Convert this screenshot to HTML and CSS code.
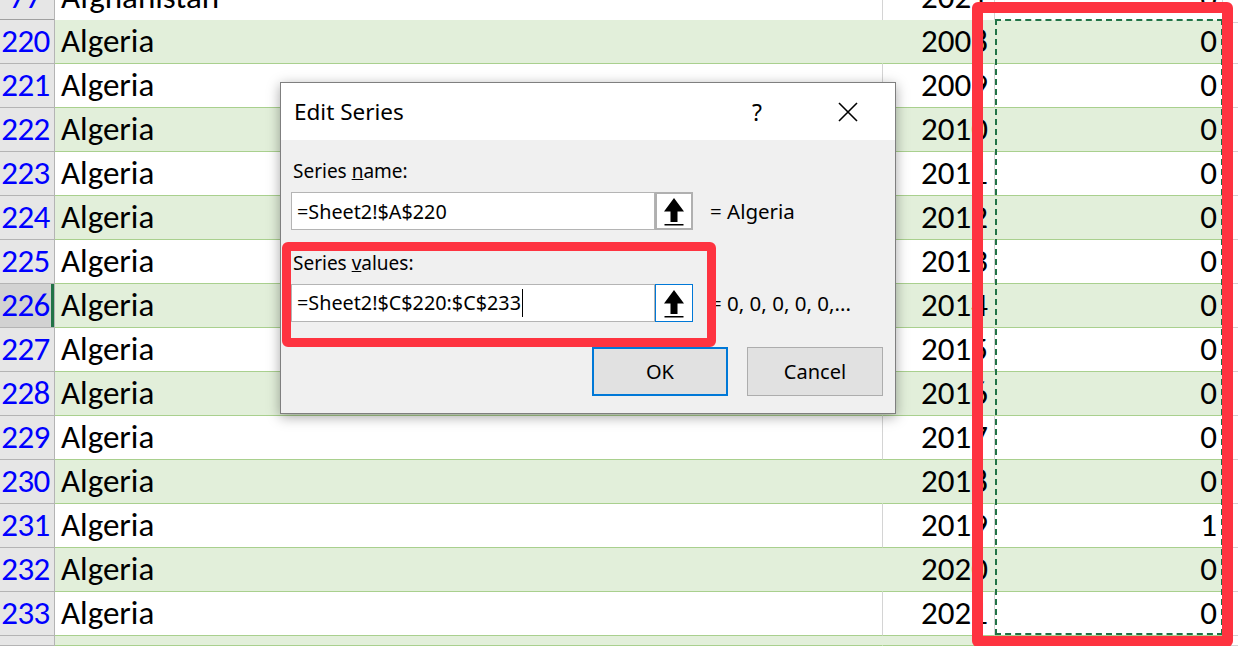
FILE: index.html
```html
<!DOCTYPE html>
<html>
<head>
<meta charset="utf-8">
<title>Edit Series</title>
<link rel="stylesheet" href="styles.css">
</head>
<body>
<div class="sheet">
  <div class="row"><div class="hdr hid">77</div><div class="c name">Afghanistan</div><div class="c year">2021</div><div class="c val">0</div><div class="c rest"></div></div>
  <div class="row band"><div class="hdr">220</div><div class="c name">Algeria</div><div class="c year">2008</div><div class="c val">0</div><div class="c rest"></div></div>
  <div class="row"><div class="hdr">221</div><div class="c name">Algeria</div><div class="c year">2009</div><div class="c val">0</div><div class="c rest"></div></div>
  <div class="row band"><div class="hdr">222</div><div class="c name">Algeria</div><div class="c year">2010</div><div class="c val">0</div><div class="c rest"></div></div>
  <div class="row"><div class="hdr">223</div><div class="c name">Algeria</div><div class="c year">2011</div><div class="c val">0</div><div class="c rest"></div></div>
  <div class="row band"><div class="hdr">224</div><div class="c name">Algeria</div><div class="c year">2012</div><div class="c val">0</div><div class="c rest"></div></div>
  <div class="row"><div class="hdr">225</div><div class="c name">Algeria</div><div class="c year">2013</div><div class="c val">0</div><div class="c rest"></div></div>
  <div class="row band"><div class="hdr sel">226</div><div class="c name">Algeria</div><div class="c year">2014</div><div class="c val">0</div><div class="c rest"></div></div>
  <div class="row"><div class="hdr">227</div><div class="c name">Algeria</div><div class="c year">2015</div><div class="c val">0</div><div class="c rest"></div></div>
  <div class="row band"><div class="hdr">228</div><div class="c name">Algeria</div><div class="c year">2016</div><div class="c val">0</div><div class="c rest"></div></div>
  <div class="row"><div class="hdr">229</div><div class="c name">Algeria</div><div class="c year">2017</div><div class="c val">0</div><div class="c rest"></div></div>
  <div class="row band"><div class="hdr">230</div><div class="c name">Algeria</div><div class="c year">2018</div><div class="c val">0</div><div class="c rest"></div></div>
  <div class="row"><div class="hdr">231</div><div class="c name">Algeria</div><div class="c year">2019</div><div class="c val">1</div><div class="c rest"></div></div>
  <div class="row band"><div class="hdr">232</div><div class="c name">Algeria</div><div class="c year">2020</div><div class="c val">0</div><div class="c rest"></div></div>
  <div class="row"><div class="hdr">233</div><div class="c name">Algeria</div><div class="c year">2021</div><div class="c val">0</div><div class="c rest"></div></div>
  <div class="row band last"><div class="hdr"></div><div class="c name"></div><div class="c year"></div><div class="c val"></div><div class="c rest"></div></div>
</div>

<div class="marquee"></div>
<div class="callout callout-col"></div>

<div class="dialog">
  <div class="dlg-title">
    <span class="dlg-name">Edit Series</span>
    <span class="help">?</span>
    <span class="close">
      <svg width="20" height="20" viewBox="0 0 20 20"><path d="M1 1 L19 19 M19 1 L1 19" stroke="#000" stroke-width="1.6" fill="none"/></svg>
    </span>
  </div>
  <div class="dlg-body">
    <div class="lbl">Series <u>n</u>ame:</div>
    <div class="field">
      <div class="box">=Sheet2!$A$220</div>
      <div class="pick">
        <svg width="34" height="34" viewBox="0 0 34 34"><polygon points="17,4 27,17.5 20.5,17.5 20.5,28 13.5,28 13.5,17.5 7,17.5" fill="#000"/><rect x="7.5" y="30" width="19" height="1.5" fill="#000"/></svg>
      </div>
      <div class="eq">= Algeria</div>
    </div>
    <div class="lbl lbl2">Series <u>v</u>alues:</div>
    <div class="field">
      <div class="box"><span class="caret">=Sheet2!$C$220:$C$233</span></div>
      <div class="pick focus">
        <svg width="34" height="34" viewBox="0 0 34 34"><polygon points="17,4 27,17.5 20.5,17.5 20.5,28 13.5,28 13.5,17.5 7,17.5" fill="#000"/><rect x="7.5" y="30" width="19" height="1.5" fill="#000"/></svg>
      </div>
      <div class="eq">= 0, 0, 0, 0, 0,...</div>
    </div>
    <div class="btns">
      <div class="btn default">OK</div>
      <div class="btn">Cancel</div>
    </div>
  </div>
</div>

<div class="callout callout-field"></div>
</body>
</html>
```

FILE: styles.css
```css
* { box-sizing: border-box; }

body {
  margin: 0;
  width: 1238px;
  height: 646px;
  overflow: hidden;
  position: relative;
  background: #fff;
  font-family: "Carlito", "Lato", "Liberation Sans", sans-serif;
}

.sheet {
  margin-top: -24px;
  height: 670px;
  overflow: hidden;
}

.row {
  display: grid;
  grid-template-columns: 55px 828px 112px 228px 1fr;
  height: 44px;
  font-size: 33px;
  line-height: 43px;
  color: #000;
}

.row.last {
  height: 10px;
}

.hdr {
  background: #e6e6e6;
  color: #0000ff;
  text-align: center;
  border-right: 1px solid #b4b4b4;
  border-bottom: 1px solid #b4b4b4;
  padding-right: 3px;
  letter-spacing: -0.5px;
}

.hdr.hid {
  border-bottom: 4px double #a0a0a0;
}

.hdr.sel {
  background: #d2d2d2;
  box-shadow: inset -3px 0 0 #217346;
}

.c {
  border-bottom: 1px solid #a9d08e;
  border-right: 1px solid #d4d4d4;
  white-space: nowrap;
  overflow: hidden;
}

.name { padding-left: 6px; }
.year { text-align: right; padding-right: 6px; }
.val { text-align: right; padding-right: 5px; }

.rest {
  border-bottom-color: #d4d4d4;
  border-right: none;
}

.band .name,
.band .year,
.band .val {
  background: #e2efda;
  border-right-color: #e2efda;
}

/* copy marquee */
.marquee {
  position: absolute;
  left: 995px;
  top: 19px;
  width: 228px;
  height: 616px;
  border: 2px dashed #217346;
}

/* red annotation boxes */
.callout {
  position: absolute;
  border: 10px solid #fe3340;
  border-radius: 6px;
}

.callout-col {
  left: 972px;
  top: 2px;
  width: 261px;
  height: 645px;
  border-width: 11px;
}

.callout-field {
  left: 282px;
  top: 242px;
  width: 434px;
  height: 105px;
  border-width: 9px;
}

/* dialog */
.dialog {
  position: absolute;
  left: 280px;
  top: 82px;
  width: 616px;
  height: 332px;
  border: 1px solid #7f7f7f;
  background: #f0f0f0;
  box-shadow: 0 3px 12px rgba(0, 0, 0, 0.35);
  font-family: "Noto Sans", "Open Sans", "Liberation Sans", sans-serif;
  color: #000;
  display: flex;
  flex-direction: column;
}

.dlg-title {
  height: 57px;
  background: #fff;
  display: flex;
  align-items: center;
  padding-left: 13px;
  font-size: 22.5px;
}

.dlg-name {
  flex: 1;
}

.help {
  width: 40px;
  text-align: center;
  font-size: 23px;
}

.close {
  width: 40px;
  margin-left: 51px;
  margin-right: 27px;
  display: flex;
  justify-content: center;
}

.dlg-body {
  flex: 1;
  padding: 19px 12px 0 10px;
  display: flex;
  flex-direction: column;
}

.lbl {
  font-size: 19px;
  line-height: 24px;
  height: 24px;
  margin-left: 2px;
}

.lbl2 {
  margin-top: 21px;
}

.field {
  display: flex;
  align-items: center;
  margin-top: 9px;
  height: 38px;
}

.box {
  width: 364px;
  height: 38px;
  border: 1px solid #b4b4b4;
  background: #fff;
  font-size: 19.8px;
  padding-left: 5px;
  display: flex;
  align-items: center;
  white-space: nowrap;
}

.caret {
  border-right: 1px solid #000;
  padding-right: 1px;
  line-height: 28px;
}

.pick {
  width: 38px;
  height: 38px;
  border: 2px solid #b0b0b0;
  background: #fff;
  display: flex;
  align-items: center;
  justify-content: center;
}

.pick.focus {
  border: 1px solid #0078d7;
}

.eq {
  margin-left: 17px;
  font-size: 20.5px;
  white-space: nowrap;
}

.btns {
  display: flex;
  justify-content: flex-end;
  gap: 19px;
  margin-top: 25px;
}

.btn {
  width: 136px;
  height: 49px;
  background: #e1e1e1;
  border: 1px solid #adadad;
  font-size: 20px;
  display: flex;
  align-items: center;
  justify-content: center;
}

.btn.default {
  border: 2px solid #0078d7;
}
```
